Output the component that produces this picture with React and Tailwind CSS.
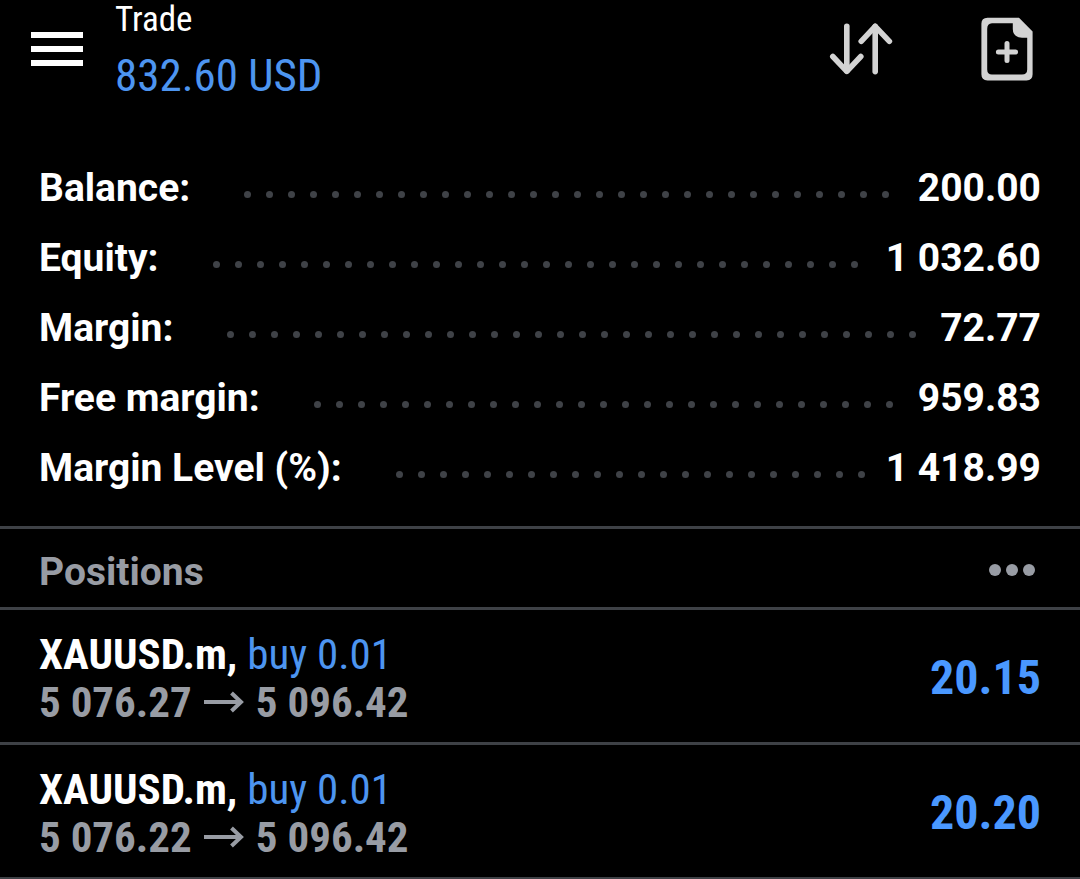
const account = [
  { label: "Balance:", value: "200.00" },
  { label: "Equity:", value: "1 032.60" },
  { label: "Margin:", value: "72.77" },
  { label: "Free margin:", value: "959.83" },
  { label: "Margin Level (%):", value: "1 418.99" },
];

const positions = [
  {
    id: 1,
    symbol: "XAUUSD.m",
    side: "buy 0.01",
    open: "5 076.27",
    current: "5 096.42",
    profit: "20.15",
  },
  {
    id: 2,
    symbol: "XAUUSD.m",
    side: "buy 0.01",
    open: "5 076.22",
    current: "5 096.42",
    profit: "20.20",
  },
];

// more than fit on one line, the rest wraps out of sight
const dots = Array.from({ length: 100 }, (_, i) => i);

function MenuIcon() {
  return (
    <svg width="52" height="34" viewBox="0 0 52 34" fill="#fff">
      <rect x="0" y="0" width="52" height="6" />
      <rect x="0" y="14" width="52" height="6" />
      <rect x="0" y="28" width="52" height="6" />
    </svg>
  );
}

function SortIcon() {
  return (
    <svg
      width="64"
      height="64"
      viewBox="0 0 64 64"
      fill="none"
      stroke="#d3d3d3"
      strokeWidth="5.6"
      strokeLinecap="round"
      strokeLinejoin="round"
    >
      <path d="M17.8 9.2V54" />
      <path d="M3.8 39.5L17.8 54.3L31.8 39.5" />
      <path d="M46.2 54.6V9.5" />
      <path d="M32.2 24.3L46.2 9.3L60.4 24.3" />
    </svg>
  );
}

function NewOrderIcon() {
  return (
    <svg width="52" height="64" viewBox="0 0 52 64" fill="none">
      <path
        fill="#d3d3d3"
        fillRule="evenodd"
        d="M6.5 .7H38L51.6 14.4V57.3Q51.6 63.4 45.5 63.4H6.5Q.4 63.4 .4 57.3V6.8Q.4 .7 6.5 .7ZM11 6.3Q6.2 6.6 6.2 12V52.5Q6.2 57.6 11 57.6H41Q46.2 57.6 46.2 52.5V20.8H41Q31.8 20 31.8 12V6.3Z"
      />
      <path
        stroke="#d3d3d3"
        strokeWidth="5"
        strokeLinecap="round"
        d="M26 26.4V43.6M17.4 35H34.6"
      />
    </svg>
  );
}

function ArrowIcon() {
  return (
    <svg
      width="40"
      height="22"
      viewBox="0 0 40 22"
      fill="none"
      stroke="currentColor"
      strokeWidth="4"
    >
      <path d="M0 11H37" />
      <path d="M27.5 2L37 11L27.5 20" />
    </svg>
  );
}

function Header() {
  return (
    <header className="flex items-start pl-[31px] pr-[47px] font-['Roboto_Condensed',Roboto,sans-serif]">
      <button aria-label="Menu" className="mt-8">
        <MenuIcon />
      </button>
      <div className="ml-8 flex-1">
        <h1 className="text-[35px] leading-[40px]">Trade</h1>
        <p className="mt-2 text-[45px] leading-[56px] text-[#4d95f0]">
          832.60 USD
        </p>
      </div>
      <div className="flex gap-[88px] pt-[17px]">
        <button aria-label="Sort">
          <SortIcon />
        </button>
        <button aria-label="New order">
          <NewOrderIcon />
        </button>
      </div>
    </header>
  );
}

function AccountRow({ label, value }) {
  return (
    <div className="flex h-[70px] items-center">
      <dt>{label}</dt>
      <div
        aria-hidden="true"
        className="ml-[54px] mr-4 mt-[13px] flex h-[7px] flex-1 flex-wrap gap-x-[15px] overflow-hidden"
      >
        {dots.map((i) => (
          <span key={i} className="size-[7px] rounded-full bg-[#3f4247]" />
        ))}
      </div>
      <dd>{value}</dd>
    </div>
  );
}

function Position({ position }) {
  return (
    <li className="flex h-[135px] items-center justify-between border-b-3 border-[#3e4146] px-[39px] pt-1 font-['Roboto_Condensed',Roboto,sans-serif]">
      <div className="text-[43px] leading-[48px]">
        <p>
          <span className="font-bold">{position.symbol},</span>{" "}
          <span className="text-[#4d95f0]">{position.side}</span>
        </p>
        <p className="flex items-center gap-3 font-bold text-[#989ca4]">
          <span>{position.open}</span>
          <ArrowIcon />
          <span>{position.current}</span>
        </p>
      </div>
      <p className="text-[48px] leading-[56px] font-bold text-[#4a98ff]">
        {position.profit}
      </p>
    </li>
  );
}

function App() {
  return (
    <div className="min-h-screen bg-black font-[Roboto,sans-serif] text-white">
      <Header />
      <main>
        <dl className="mt-[49px] px-[39px] pb-[23px] text-[39px] leading-[48px] font-bold">
          {account.map((row) => (
            <AccountRow key={row.label} label={row.label} value={row.value} />
          ))}
        </dl>
        <div className="flex h-[84px] items-center justify-between border-y-3 border-[#3e4146] pl-[39px] pr-[45px] pt-1 text-[#989ca4]">
          <h2 className="mt-1 text-[39px] leading-[48px] font-bold">
            Positions
          </h2>
          <button aria-label="Position options" className="flex gap-[5px]">
            <span className="size-3 rounded-full bg-current" />
            <span className="size-3 rounded-full bg-current" />
            <span className="size-3 rounded-full bg-current" />
          </button>
        </div>
        <ul>
          {positions.map((position) => (
            <Position key={position.id} position={position} />
          ))}
        </ul>
      </main>
    </div>
  );
}

export default App;
